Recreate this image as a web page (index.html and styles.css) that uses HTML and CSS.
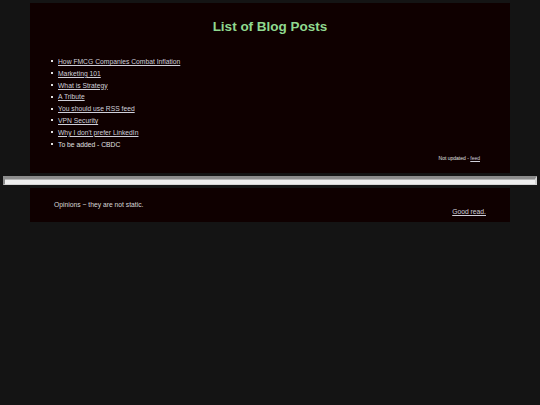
FILE: index.html
```html
<!DOCTYPE html>
<html lang="en">
<head>
<meta charset="utf-8">
<title>List of Blog Posts</title>
<link rel="stylesheet" href="styles.css">
</head>
<body>
<div class="main">
  <h1 class="title">List of Blog Posts</h1>
  <ul class="posts">
    <li><a href="#">How FMCG Companies Combat Inflation</a></li>
    <li><a href="#">Marketing 101</a></li>
    <li><a href="#">What is Strategy</a></li>
    <li><a href="#">A Tribute</a></li>
    <li><a href="#">You should use RSS feed</a></li>
    <li><a href="#">VPN Security</a></li>
    <li><a href="#">Why I don't prefer LinkedIn</a></li>
    <li>To be added - CBDC</li>
  </ul>
  <p class="updated">Not updated - <a href="#">feed</a></p>
</div>
<hr class="rule">
<div class="footer">
  <p class="motto">Opinions ~ they are not static.</p>
  <p class="goodread"><a href="#">Good read.</a></p>
</div>
</body>
</html>
```
FILE: styles.css
```css
html, body {
  background: #141414;
}
body {
  margin: 3px;
  font-family: "Liberation Sans", Arial, sans-serif;
  color: #e0e0e0;
}
a {
  color: #d0d0da;
  text-decoration: underline;
}
.main {
  width: 480px;
  margin: 0 auto;
  background: #0f0000;
  padding: 16px 30px 11.7px 28px;
  box-sizing: border-box;
}
.title {
  margin: 0;
  font-size: 13.5px;
  line-height: 15px;
  font-weight: bold;
  text-align: center;
  color: #8fd98f;
  padding-left: 2px;
}
.posts {
  margin: 22px 0 0 0;
  padding: 0;
  font-size: 6.75px;
  line-height: 11.8px;
  list-style: none;
}
.posts li::before {
  content: "";
  display: inline-block;
  width: 2px;
  height: 2px;
  background: #e0e0e0;
  margin-left: -7.3px;
  margin-right: 5.3px;
  vertical-align: 1.6px;
}
.updated {
  margin: 4.6px 0 0 0;
  font-size: 5px;
  line-height: 6px;
  text-align: right;
  color: #e0e0e0;
}
.rule {
  margin: 3.6px 0 0 0;
  height: 4.4px;
  border-style: solid;
  border-width: 3px 2px 1px 2px;
  border-color: #8c8c8c #d4d4d4 #d4d4d4 #8c8c8c;
  background: linear-gradient(#b8b8b8 0 1px, #eeeeee 1px);
}
.footer {
  width: 480px;
  margin: 3.6px auto 0 auto;
  background: #0f0000;
  padding: 12.7px 24px 6.75px 24px;
  box-sizing: border-box;
  font-size: 6.75px;
  line-height: 7.3px;
}
.motto {
  margin: 0;
  color: #d8d8d8;
}
.goodread {
  margin: 0;
  text-align: right;
}
```
